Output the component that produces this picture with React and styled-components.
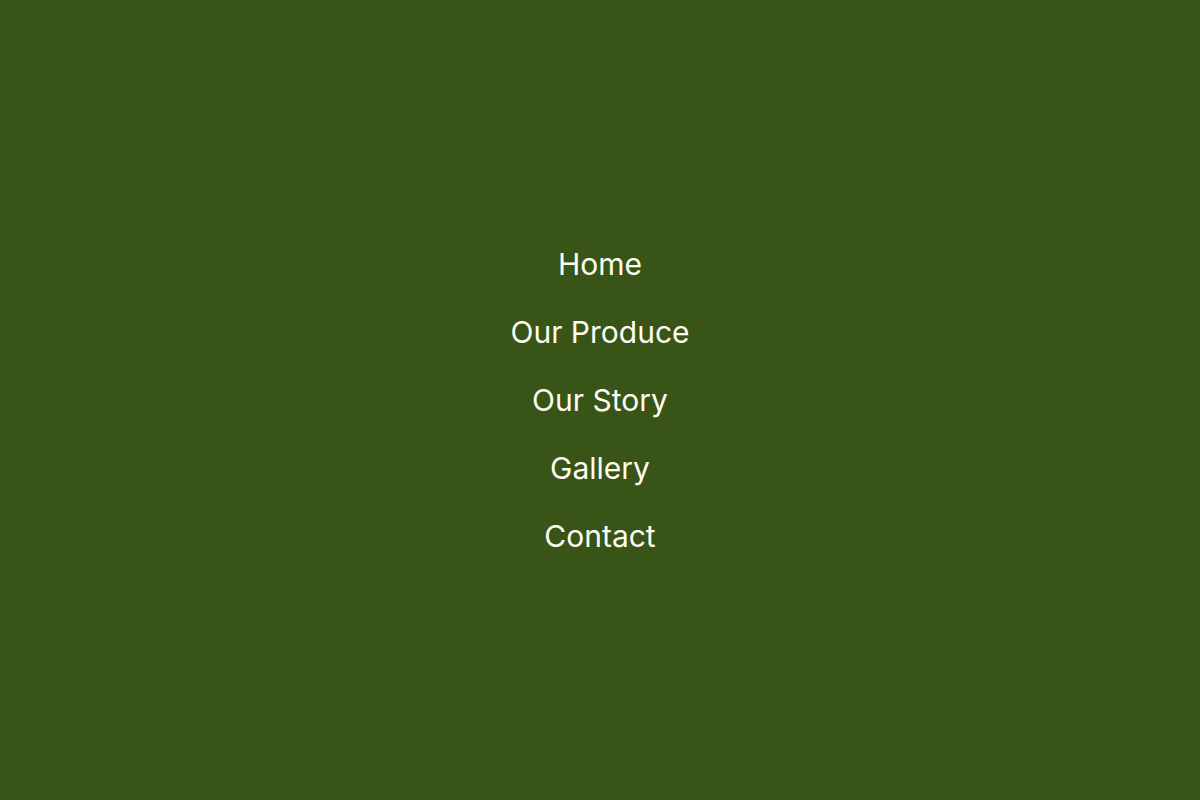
import React from "react";
import styled, { createGlobalStyle } from "styled-components";

const GlobalStyle = createGlobalStyle`
  html, body {
    margin: 0;
    padding: 0;
  }
  body {
    font-family: Inter, "Noto Sans", sans-serif;
  }
`;

const Overlay = styled.div`
  width: 100%;
  height: 100vh;
  background-color: #385416;
  display: flex;
  align-items: center;
  justify-content: center;
`;

const Menu = styled.ul`
  list-style: none;
  margin: 0;
  padding: 0;
  display: flex;
  flex-direction: column;
  align-items: center;
  gap: 23px;
`;

const MenuItem = styled.a`
  display: block;
  font-size: 30px;
  line-height: 45px;
  font-weight: 400;
  color: #fdfcf3;
  text-decoration: none;
  cursor: pointer;
`;

const links = ["Home", "Our Produce", "Our Story", "Gallery", "Contact"];

const App = () => {
  return (
    <>
      <GlobalStyle />
      <Overlay>
        <Menu>
          {links.map((l) => (
            <li key={l}>
              <MenuItem href={"#" + l.toLowerCase().replace(" ", "-")}>{l}</MenuItem>
            </li>
          ))}
        </Menu>
      </Overlay>
    </>
  );
};

export default App;
